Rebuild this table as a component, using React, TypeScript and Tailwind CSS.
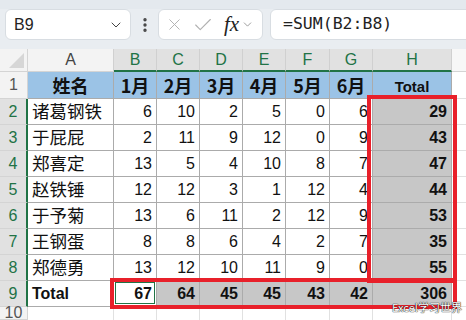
import { Check, ChevronDown, EllipsisVertical, X } from "lucide-react";

const cols = ["A", "B", "C", "D", "E", "F", "G", "H"];
const months = ["1月", "2月", "3月", "4月", "5月", "6月"];

type Person = { name: string; vals: number[]; total: number };
const people: Person[] = [
  { name: "诸葛钢铁", vals: [6, 10, 2, 5, 0, 6], total: 29 },
  { name: "于屁屁", vals: [2, 11, 9, 12, 0, 9], total: 43 },
  { name: "郑喜定", vals: [13, 5, 4, 10, 8, 7], total: 47 },
  { name: "赵铁锤", vals: [12, 12, 3, 1, 12, 4], total: 44 },
  { name: "于予菊", vals: [13, 6, 11, 2, 12, 9], total: 53 },
  { name: "王钢蛋", vals: [8, 8, 6, 4, 2, 7], total: 35 },
  { name: "郑德勇", vals: [13, 12, 10, 11, 9, 0], total: 55 },
];
const totals = [67, 64, 45, 45, 43, 42, 306];

const cjk = "font-['Noto_Sans_CJK_SC',sans-serif]";
const cell = "border-r border-b border-[#ababab] flex items-center";

function RowHead({ n, on }: { n: number; on: boolean }) {
  return (
    <div
      className={
        "flex items-center justify-center text-[16px] border-b border-[#d4d4d4] " +
        (on
          ? "bg-[#e1e1e1] text-[#217346] border-r-2 border-r-[#217346]"
          : "bg-[#f3f3f3] text-[#555] border-r border-r-[#d4d4d4]")
      }
    >
      {n}
    </div>
  );
}

export default function App() {
  return (
    <div className="relative w-[466px] h-[320px] overflow-hidden bg-white font-['Liberation_Sans',sans-serif] text-[#111]">
      {/* formula bar */}
      <div className="h-[49px] bg-[#e9edf1] border-t-[9px] border-[#e4e9ee] flex items-start pl-[5px] overflow-hidden">
        <div className="shrink-0 w-[126px] h-[31px] bg-white rounded-md border border-[#d8dde2] flex items-center justify-between pl-[8px] pr-[6px]">
          <span className="text-[16px] text-[#222]">B9</span>
          <ChevronDown size={16} strokeWidth={1.5} className="text-[#444]" />
        </div>
        <div className="shrink-0 w-[27px] h-[31px] flex items-center justify-center">
          <EllipsisVertical size={18} strokeWidth={2.5} className="text-[#444]" />
        </div>
        <div className="shrink-0 w-[105px] h-[31px] bg-white rounded-md border border-[#d8dde2] flex items-center pl-[6px] pr-[4px]">
          <X size={19} strokeWidth={1.2} className="text-[#b0b0b0]" />
          <Check size={22} strokeWidth={1.2} className="text-[#b0b0b0] ml-[8px]" />
          <span className="ml-[10px] font-['Liberation_Serif',serif] italic text-[21px] text-[#222] leading-none">
            fx
          </span>
          <ChevronDown size={13} strokeWidth={1.5} className="text-[#888] ml-[2px]" />
        </div>
        <div className="ml-[7px] w-[210px] shrink-0 h-[31px] bg-white rounded-md border border-[#d8dde2] flex items-center pl-[12px]">
          <span className="font-['DejaVu_Sans_Mono',monospace] text-[16.5px] text-[#222]">
            =SUM(B2:B8)
          </span>
        </div>
      </div>

      {/* sheet grid */}
      <div className="grid grid-cols-[28px_86px_43px_43px_43px_43px_44px_43px_79px_14px] grid-rows-[23px_27px_26px_26px_26px_26px_26px_26px_26px_26px_13px]">
        {/* column headers */}
        <div className="bg-[#f3f3f3] border-r border-b border-[#d4d4d4] relative">
          <div className="absolute right-[3px] bottom-[3px] w-0 h-0 border-l-[15px] border-l-transparent border-b-[15px] border-b-[#d6d6d6]" />
        </div>
        {cols.map((c) => (
          <div
            key={c}
            className={
              "flex items-center justify-center text-[16px] border-r border-[#d0d0d0] " +
              (c === "A"
                ? "bg-[#f3f3f3] text-[#444] border-b border-b-[#d4d4d4]"
                : "bg-[#e1e1e1] text-[#217346] border-b-2 border-b-[#217346]")
            }
          >
            {c}
          </div>
        ))}
        <div className="bg-[#f7f7f7] border-b border-[#d4d4d4]" />

        {/* row 1 */}
        <RowHead n={1} on={false} />
        <div className={cell + " bg-[#9bc3e6] justify-center font-bold text-[18px] " + cjk}>姓名</div>
        {months.map((m) => (
          <div key={m} className={cell + " bg-[#9bc3e6] justify-center font-bold text-[18px] " + cjk}>
            {m}
          </div>
        ))}
        <div className={cell + " bg-[#9bc3e6] justify-center font-bold text-[15px] pt-[4px]"}>Total</div>
        <div className="border-b border-[#e1e1e1]" />

        {/* data rows */}
        {people.map((p, i) => (
          <>
            <RowHead key={"h" + i} n={i + 2} on={true} />
            <div key={"n" + i} className={cell + " pl-[4px] text-[17.5px] " + cjk}>
              {p.name}
            </div>
            {p.vals.map((v, j) => (
              <div key={i + "-" + j} className={cell + " justify-end pr-[4px] text-[16px]"}>
                {v}
              </div>
            ))}
            <div key={"t" + i} className={cell + " justify-end pr-[4px] text-[16px] font-bold bg-[#c7c7c7]"}>
              {p.total}
            </div>
            <div key={"e" + i} className="border-b border-[#e1e1e1]" />
          </>
        ))}

        {/* total row */}
        <RowHead n={9} on={true} />
        <div className={cell + " pl-[4px] text-[16px] font-bold"}>Total</div>
        {totals.map((v, j) => (
          <div
            key={"s" + j}
            className={cell + " relative justify-end pr-[4px] text-[16px] font-bold " + (j === 0 ? "bg-white" : "bg-[#c7c7c7]")}
          >
            {j === 0 && <div className="absolute left-[1px] top-[1px] right-[1px] bottom-[2px] border-[1.5px] border-[#217346]" />}
            <span className="relative">{v}</span>
          </div>
        ))}
        <div className="border-b border-[#e1e1e1]" />

        {/* row 10 */}
        <RowHead n={10} on={false} />
        {cols.map((c) => (
          <div key={"r10" + c} className="border-r border-[#e1e1e1]" />
        ))}
        <div />
      </div>

      {/* red highlight boxes */}
      <div className="absolute left-[367px] top-[95px] w-[90px] h-[188px] border-[4.5px] border-[#e8202a]" />
      <div className="absolute left-[110px] top-[278px] w-[347px] h-[31px] border-[4.5px] border-[#e8202a]" />

      {/* watermark */}
      <div
        className={
          "absolute left-[392px] top-[302px] whitespace-nowrap leading-none text-[11px] text-white [text-shadow:0_0_1px_#000,0_0_1px_#000] " +
          cjk
        }
      >
        Excel学习世界
      </div>
    </div>
  );
}
